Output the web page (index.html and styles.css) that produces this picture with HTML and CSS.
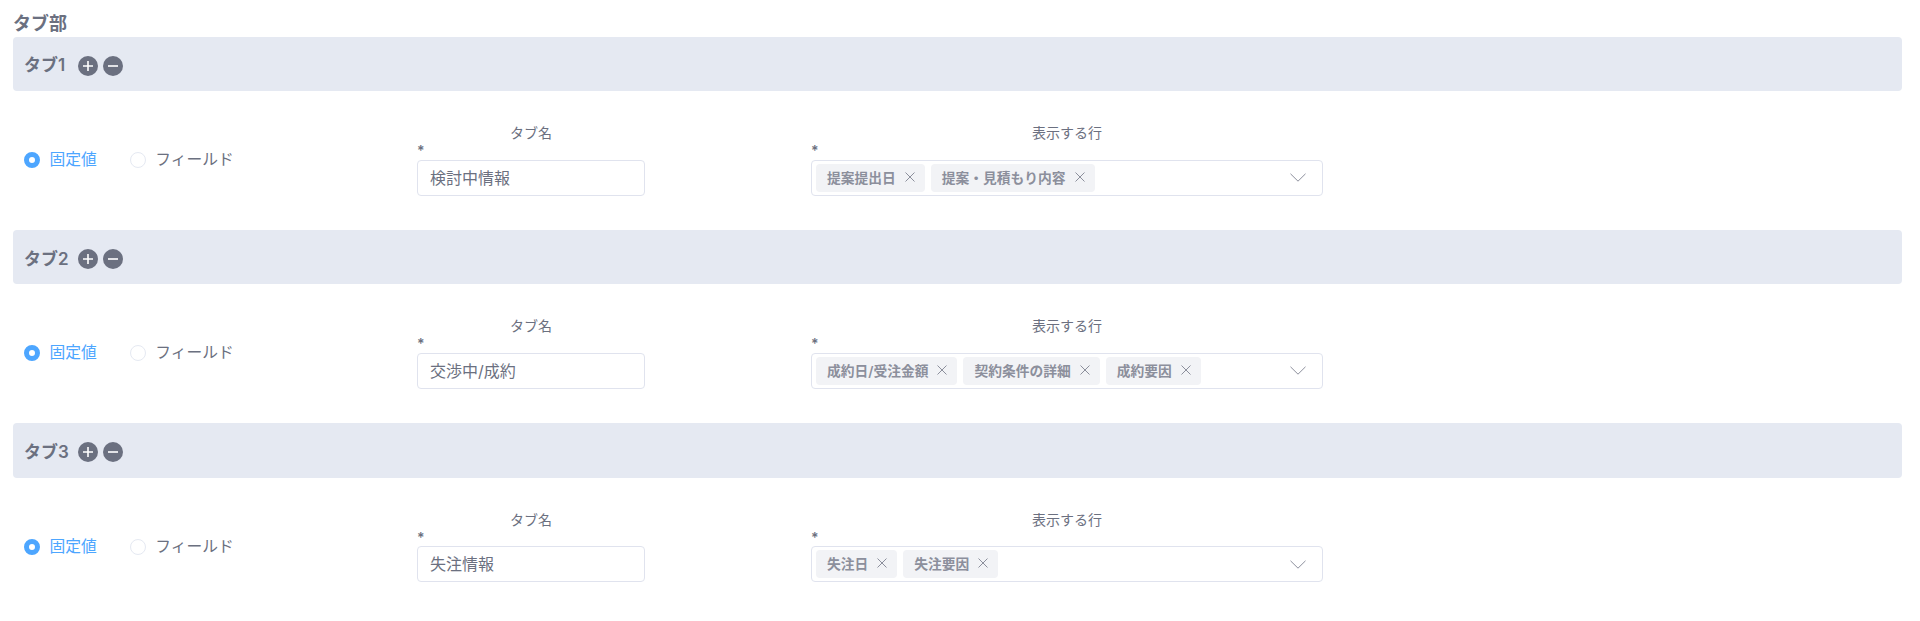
FILE: index.html
```html
<!DOCTYPE html>
<html lang="ja">
  <head>
    <meta charset="UTF-8" />
    <title>タブ部</title>
    <link rel="stylesheet" href="styles.css">
  </head>
  <body>
    <h2 class="title">タブ部</h2>

    <!-- Tab 1 -->
    <section class="tab">
      <div class="tab-head">
        <span class="tab-name">タブ1</span>
        <svg class="round-btn" viewBox="0 0 20 20"><circle cx="10" cy="10" r="10" /><path d="M5 10h10M10 5v10" /></svg>
        <svg class="round-btn" viewBox="0 0 20 20"><circle cx="10" cy="10" r="10" /><path d="M5 10h10" /></svg>
      </div>
      <div class="tab-body">
        <div class="radios">
          <label class="radio checked"><span class="dot"></span>固定値</label>
          <label class="radio"><span class="dot"></span>フィールド</label>
        </div>
        <div class="field name-field">
          <div class="field-label">タブ名</div>
          <div class="required">*</div>
          <div class="input">検討中情報</div>
        </div>
        <div class="field rows-field">
          <div class="field-label">表示する行</div>
          <div class="required">*</div>
          <div class="select">
            <span class="chip">提案提出日<svg class="chip-x" viewBox="0 0 12 12"><path d="M1.5 1.5l9 9M10.5 1.5l-9 9" /></svg></span>
            <span class="chip">提案・見積もり内容<svg class="chip-x" viewBox="0 0 12 12"><path d="M1.5 1.5l9 9M10.5 1.5l-9 9" /></svg></span>
            <svg class="chevron" viewBox="0 0 16 9"><path d="M0.5 0.8l7.5 7.4 7.5-7.4" /></svg>
          </div>
        </div>
      </div>
    </section>

    <!-- Tab 2 -->
    <section class="tab">
      <div class="tab-head">
        <span class="tab-name">タブ2</span>
        <svg class="round-btn" viewBox="0 0 20 20"><circle cx="10" cy="10" r="10" /><path d="M5 10h10M10 5v10" /></svg>
        <svg class="round-btn" viewBox="0 0 20 20"><circle cx="10" cy="10" r="10" /><path d="M5 10h10" /></svg>
      </div>
      <div class="tab-body">
        <div class="radios">
          <label class="radio checked"><span class="dot"></span>固定値</label>
          <label class="radio"><span class="dot"></span>フィールド</label>
        </div>
        <div class="field name-field">
          <div class="field-label">タブ名</div>
          <div class="required">*</div>
          <div class="input">交渉中/成約</div>
        </div>
        <div class="field rows-field">
          <div class="field-label">表示する行</div>
          <div class="required">*</div>
          <div class="select">
            <span class="chip">成約日/受注金額<svg class="chip-x" viewBox="0 0 12 12"><path d="M1.5 1.5l9 9M10.5 1.5l-9 9" /></svg></span>
            <span class="chip">契約条件の詳細<svg class="chip-x" viewBox="0 0 12 12"><path d="M1.5 1.5l9 9M10.5 1.5l-9 9" /></svg></span>
            <span class="chip">成約要因<svg class="chip-x" viewBox="0 0 12 12"><path d="M1.5 1.5l9 9M10.5 1.5l-9 9" /></svg></span>
            <svg class="chevron" viewBox="0 0 16 9"><path d="M0.5 0.8l7.5 7.4 7.5-7.4" /></svg>
          </div>
        </div>
      </div>
    </section>

    <!-- Tab 3 -->
    <section class="tab">
      <div class="tab-head">
        <span class="tab-name">タブ3</span>
        <svg class="round-btn" viewBox="0 0 20 20"><circle cx="10" cy="10" r="10" /><path d="M5 10h10M10 5v10" /></svg>
        <svg class="round-btn" viewBox="0 0 20 20"><circle cx="10" cy="10" r="10" /><path d="M5 10h10" /></svg>
      </div>
      <div class="tab-body">
        <div class="radios">
          <label class="radio checked"><span class="dot"></span>固定値</label>
          <label class="radio"><span class="dot"></span>フィールド</label>
        </div>
        <div class="field name-field">
          <div class="field-label">タブ名</div>
          <div class="required">*</div>
          <div class="input">失注情報</div>
        </div>
        <div class="field rows-field">
          <div class="field-label">表示する行</div>
          <div class="required">*</div>
          <div class="select">
            <span class="chip">失注日<svg class="chip-x" viewBox="0 0 12 12"><path d="M1.5 1.5l9 9M10.5 1.5l-9 9" /></svg></span>
            <span class="chip">失注要因<svg class="chip-x" viewBox="0 0 12 12"><path d="M1.5 1.5l9 9M10.5 1.5l-9 9" /></svg></span>
            <svg class="chevron" viewBox="0 0 16 9"><path d="M0.5 0.8l7.5 7.4 7.5-7.4" /></svg>
          </div>
        </div>
      </div>
    </section>
  </body>
</html>
```

FILE: styles.css
```css
body {
  font-family: Inter, "Noto Sans CJK JP", sans-serif;
  background-color: #fff;
  color: #6b7080;
  margin: 0;
  padding: 0 18px 0 13px;
  overflow: hidden;
}

.title {
  font-size: 18px;
  line-height: 24px;
  font-weight: 600;
  height: 36.5px;
  margin: 0;
  padding-top: 12px;
  box-sizing: border-box;
}

.tab {
  height: 193.25px;
}

.tab-head {
  display: flex;
  align-items: center;
  height: 54.5px;
  padding: 4px 0 0 11px;
  background-color: #e5e9f2;
  border-radius: 4px;
  box-sizing: border-box;
}

.tab-name {
  width: 54px;
  font-size: 17px;
  font-weight: 600;
  position: relative;
  top: -2px;
}

.round-btn {
  width: 20px;
  height: 20px;
  margin-right: 5px;
}

.round-btn circle {
  fill: #6b7080;
}

.round-btn path {
  stroke: #fff;
  stroke-width: 1.6;
  fill: none;
}

.tab-body {
  display: flex;
  align-items: flex-start;
  padding-top: 32px;
}

.radios {
  display: flex;
  gap: 33px;
  width: 404px;
  padding: 26px 0 0 11px;
  box-sizing: border-box;
}

.radio {
  display: flex;
  align-items: center;
  gap: 9.5px;
  font-size: 15.75px;
  line-height: 22px;
}

.dot {
  width: 16px;
  height: 16px;
  border: 1px solid #e5e9f2;
  border-radius: 50%;
  box-sizing: border-box;
  background-color: #fff;
}

.radio.checked {
  color: #4da6ff;
}

.radio.checked .dot {
  border: 5.5px solid #4da6ff;
}

.field-label {
  font-size: 14px;
  line-height: 20px;
  text-align: center;
}

.required {
  font-size: 14px;
  font-weight: 600;
  line-height: 10px;
  height: 13.5px;
  margin-top: 3px;
}

.name-field {
  width: 228px;
  margin-right: 166px;
}

.rows-field {
  width: 512px;
}

.input,
.select {
  display: flex;
  align-items: center;
  height: 36px;
  border: 1px solid #e0e3ee;
  border-radius: 4px;
  box-sizing: border-box;
}

.input {
  padding: 0 0 2px 12px;
  font-size: 16px;
}

.select {
  gap: 6px;
  padding: 0 16px 0 4px;
}

.chip {
  display: flex;
  align-items: center;
  gap: 8px;
  height: 28px;
  padding: 0 9px 2px 11px;
  font-size: 13.75px;
  font-weight: 600;
  color: #8c8f9c;
  background-color: #f2f3f6;
  border-radius: 4px;
  box-sizing: border-box;
}

.chip-x {
  width: 12px;
  height: 12px;
}

.chip-x path,
.chevron path {
  stroke: #8c8f9c;
  stroke-width: 1;
  fill: none;
}

.chevron {
  width: 16px;
  height: 9px;
  margin-left: auto;
}
```
